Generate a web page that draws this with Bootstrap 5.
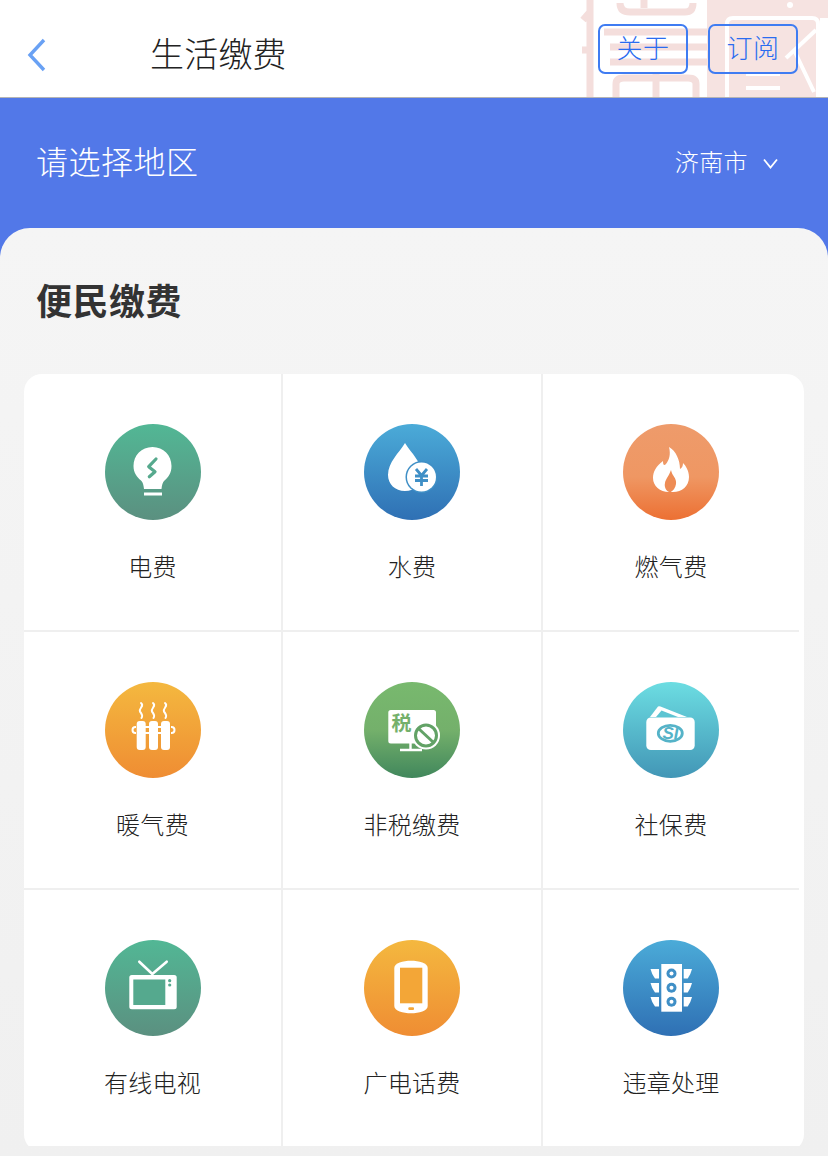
<!DOCTYPE html>
<html lang="zh-CN">
<head>
    <meta charset="UTF-8">
    <meta name="viewport" content="width=device-width, initial-scale=1.0">
    <title>生活缴费</title>
    <link rel="stylesheet" href="https://cdn.jsdelivr.net/npm/bootstrap@5.3.0/dist/css/bootstrap.min.css">
    <style>
        body {
            font-family: "Liberation Sans", "Noto Sans CJK SC", sans-serif;
            background-color: #f1f1f1;
            height: 1156px;
            overflow: hidden;
        }
        .top-bar {
            height: 98px;
            padding: 12px 30px 0 27px;
            border-bottom: 1px solid #b4b4b4;
            background-color: #fff;
            overflow: hidden;
        }
        .seal-mark {
            position: absolute;
            top: 0;
            left: 580px;
        }
        .page-title {
            margin: 0 0 0 103px;
            font-size: 34px;
            font-weight: 300;
            color: #222;
            line-height: 1;
            letter-spacing: .2px;
        }
        .head-btns {
            gap: 20px;
            margin-bottom: 12px;
        }
        .head-btn {
            --bs-btn-color: #2a6cf0;
            --bs-btn-border-color: #3f7cf2;
            --bs-btn-border-width: 2px;
            --bs-btn-border-radius: 7px;
            --bs-btn-font-size: 26px;
            --bs-btn-font-weight: 300;
            --bs-btn-padding-x: 0;
            --bs-btn-padding-y: 0;
            width: 90px;
            height: 50px;
            line-height: 44px;
            letter-spacing: .5px;
            background: transparent;
        }
        .blue-wrap {
            background-color: #5278e8;
        }
        .area-row {
            height: 130px;
            padding: 0 50px 0 36px;
            color: #fff;
            font-weight: 300;
        }
        .area-title {
            font-size: 32px;
            line-height: 1;
            padding-bottom: 1px;
            letter-spacing: .5px;
        }
        .area-city {
            font-size: 24px;
            line-height: 1;
            letter-spacing: .4px;
            gap: 15px;
        }
        .sheet {
            height: 928px;
            padding: 0 24px;
            border-radius: 30px 30px 0 0;
            background: linear-gradient(#f5f5f5, #f0f0f0);
        }
        .sheet-title {
            margin: 0;
            padding: 54px 0 50px 12px;
            font-size: 36px;
            font-weight: 700;
            line-height: 42px;
            letter-spacing: .5px;
            color: #333;
        }
        .fee-clip {
            height: 772px;
            overflow: hidden;
        }
        .fee-card {
            height: 778px;
            border: 0;
            border-radius: 18px;
            overflow: hidden;
        }
        .fee-grid {
            display: grid;
            grid-template-columns: 259px 260px 256px;
            grid-auto-rows: 258px;
        }
        .fee-cell {
            padding-top: 50px;
            border-right: 2px solid #efefef;
            border-bottom: 2px solid #efefef;
        }
        .fee-cell:nth-child(3n) {
            border-right: 0;
        }
        .fee-cell svg {
            display: block;
        }
        .fee-label {
            margin-top: 30px;
            font-size: 24px;
            font-weight: 300;
            line-height: 36px;
            letter-spacing: .3px;
            color: #222;
        }
    </style>
</head>
<body>
    <div class="top-bar position-relative d-flex align-items-center">
        <svg class="seal-mark" width="248" height="97" viewBox="0 0 248 97">
            <g fill="none" stroke="#f4dedc" stroke-width="7">
                <path d="M10 0V97M3 20l7-8M2 50h6"/>
                <path d="M40 3Q40 12 50 12H105Q113 12 113 3"/>
                <path d="M24 32H127M30 47H127M30 62H127"/>
                <path d="M36 97V84Q36 78 44 78H108Q116 78 116 84V97"/>
                <path d="M76 72V97"/>
                <path d="M64 0V8"/>
            </g>
            <path d="M127 0H248V18H240V97H127Z" fill="#f6e3e1"/>
            <g fill="none" stroke="#fff" stroke-width="4">
                <path d="M147 97V24Q147 18 153 18H232Q238 18 238 24V97"/>
                <path d="M166 74H200M166 88H200M214 50L234 92"/>
                <path d="M236 30L206 58"/>
            </g>
            <circle cx="210" cy="5" r="3" fill="#fff"/>
        </svg>
        <svg class="position-relative flex-shrink-0" width="20" height="34" viewBox="0 0 20 34">
            <path d="M17 2L3 17L17 32" fill="none" stroke="#69a1f4" stroke-width="3.4"/>
        </svg>
        <h1 class="page-title position-relative flex-grow-1">生活缴费</h1>
        <div class="head-btns position-relative d-flex">
            <button type="button" class="btn head-btn">关于</button>
            <button type="button" class="btn head-btn">订阅</button>
        </div>
    </div>

    <div class="blue-wrap">
        <div class="area-row d-flex align-items-center justify-content-between">
            <div class="area-title">请选择地区</div>
            <div class="area-city d-flex align-items-center">
                济南市
                <svg width="15" height="11" viewBox="0 0 15 11">
                    <path d="M1 1.5L7.500 9.500L14 1.500" fill="none" stroke="#fff" stroke-width="1.800"/>
                </svg>
            </div>
        </div>

        <div class="sheet">
            <h2 class="sheet-title">便民缴费</h2>
            <div class="fee-clip">
            <div class="card fee-card">
                <div class="fee-grid">
                    <div class="fee-cell d-flex flex-column align-items-center">
                        <svg width="96" height="96" viewBox="0 0 96 96">
                            <defs>
                                <linearGradient id="gGreen" x1="0" y1="0" x2="0" y2="1"><stop offset="0" stop-color="#52b795"/><stop offset="1" stop-color="#5b9080"/></linearGradient>
                                <linearGradient id="gBlue" x1="0" y1="0" x2="0" y2="1"><stop offset="0" stop-color="#4babd8"/><stop offset="1" stop-color="#2f70b4"/></linearGradient>
                                <linearGradient id="gFlame" x1="0" y1="0" x2="0" y2="1"><stop offset="0" stop-color="#ee9b6b"/><stop offset=".55" stop-color="#ef9763"/><stop offset="1" stop-color="#ec7033"/></linearGradient>
                                <linearGradient id="gAmber" x1="0" y1="0" x2="0" y2="1"><stop offset="0" stop-color="#f4b83f"/><stop offset="1" stop-color="#ef8d33"/></linearGradient>
                                <linearGradient id="gLeaf" x1="0" y1="0" x2="0" y2="1"><stop offset="0" stop-color="#78b96e"/><stop offset=".5" stop-color="#74b06b"/><stop offset="1" stop-color="#41875c"/></linearGradient>
                                <linearGradient id="gTeal" x1="0" y1="0" x2="0" y2="1"><stop offset="0" stop-color="#6cdde2"/><stop offset="1" stop-color="#4296b6"/></linearGradient>
                            </defs>
                            <circle cx="48" cy="48" r="48" fill="url(#gGreen)"/>
                            <path d="M47.500 23C36.500 23 28.500 31.500 28.500 42C28.500 49 32 53 36 56.500C38 58.500 38.500 61 39 65H56.500C57 61 57.500 58.500 59.500 56.500C63.500 53 66.500 49 66.500 42C66.500 31.500 58.500 23 47.500 23Z" fill="#fff"/>
                            <path d="M39 70H57" stroke="#fff" stroke-width="3"/>
                            <path d="M51 35L43.700 42.700L50 47.700L44.300 52.700" fill="none" stroke="#56a98d" stroke-width="3.200" stroke-linecap="round" stroke-linejoin="round"/>
                        </svg>
                        <div class="fee-label">电费</div>
                    </div>
                    <div class="fee-cell d-flex flex-column align-items-center">
                        <svg width="96" height="96" viewBox="0 0 96 96">
                            <circle cx="48" cy="48" r="48" fill="url(#gBlue)"/>
                            <path d="M41 19C35 29 24 38 24 51C24 60 31 67 41 67C51 67 58 60 58 51C58 38 47 29 41 19Z" fill="#fff"/>
                            <circle cx="57.500" cy="53" r="16" fill="#3f8fc6"/>
                            <circle cx="57.500" cy="53" r="14.500" fill="#fff"/>
                            <path d="M52 45L57.500 51.500L63 45M51 52H64M51 56.500H64M57.500 51.500V62" fill="none" stroke="#3f8fc6" stroke-width="2.800"/>
                        </svg>
                        <div class="fee-label">水费</div>
                    </div>
                    <div class="fee-cell d-flex flex-column align-items-center">
                        <svg width="96" height="96" viewBox="0 0 96 96">
                            <circle cx="48" cy="48" r="48" fill="url(#gFlame)"/>
                            <path d="M46 23C48 31 46 36 43 40C41 42 40 41 40 37C33 42 30 48 30 54C30 62 37 68 46 68H50C59 68 66 62 66 53C66 47 63 42 60 39C60 42 59 44 57 45C57 36 53 27 46 23Z" fill="#fff"/>
                            <path d="M48 46C49 52 54 54 53 60C52.500 64 50 67 47 68.500C43 67 41 63 42 59C42.500 55 46 52 48 46Z" fill="#ee8c55"/>
                        </svg>
                        <div class="fee-label">燃气费</div>
                    </div>

                    <div class="fee-cell d-flex flex-column align-items-center">
                        <svg width="96" height="96" viewBox="0 0 96 96">
                            <circle cx="48" cy="48" r="48" fill="url(#gAmber)"/>
                            <rect x="31.700" y="39" width="9" height="29" rx="3" fill="#fff"/>
                            <rect x="44" y="39" width="9" height="29" rx="3" fill="#fff"/>
                            <rect x="56" y="39" width="9" height="29" rx="3" fill="#fff"/>
                            <path d="M31 45H30.500A3 3 0 0 0 30.500 51H31M66 45H66.500A3 3 0 0 1 66.500 51H66M40 45H57M40 51H57" fill="none" stroke="#fff" stroke-width="2"/>
                            <g fill="none" stroke="#fff" stroke-width="2" stroke-linecap="round">
                                <path d="M36 21C40 24 33.500 26 35 29.500C36 31.500 38.500 33 36.500 36"/>
                                <path d="M48 21C52 24 45.500 26 47 29.500C48 31.500 50.500 33 48.500 36"/>
                                <path d="M60 21C64 24 57.500 26 59 29.500C60 31.500 62.500 33 60.500 36"/>
                            </g>
                        </svg>
                        <div class="fee-label">暖气费</div>
                    </div>
                    <div class="fee-cell d-flex flex-column align-items-center">
                        <svg width="96" height="96" viewBox="0 0 96 96">
                            <circle cx="48" cy="48" r="48" fill="url(#gLeaf)"/>
                            <rect x="24.300" y="28" width="47.700" height="33.500" rx="2.500" fill="#fff"/>
                            <path d="M46.500 61V67M36 68H58" stroke="#fff" stroke-width="2.400"/>
                            <text x="27.500" y="49" font-size="20" font-weight="700" fill="#74b06b" font-family="Noto Sans CJK SC">税</text>
                            <circle cx="62" cy="53.500" r="14" fill="#fff"/>
                            <circle cx="62" cy="53.500" r="10.500" fill="none" stroke="#62a266" stroke-width="3"/>
                            <path d="M55 47L69 60" stroke="#62a266" stroke-width="3"/>
                        </svg>
                        <div class="fee-label">非税缴费</div>
                    </div>
                    <div class="fee-cell d-flex flex-column align-items-center">
                        <svg width="96" height="96" viewBox="0 0 96 96">
                            <circle cx="48" cy="48" r="48" fill="url(#gTeal)"/>
                            <path d="M27 35L35 24.500Q36 24 37.500 24.500L64 35Z" fill="#fff"/>
                            <path d="M33 35L38.500 28.500L55 35Z" fill="#5cc4d2"/>
                            <rect x="23.300" y="35.500" width="48.400" height="32.500" rx="4.500" fill="#fff"/>
                            <ellipse cx="47.300" cy="51.300" rx="12" ry="8" fill="none" stroke="#55b3c8" stroke-width="2.800"/>
                            <text x="39.500" y="57" font-size="17" font-weight="700" font-style="italic" fill="#55b3c8" font-family="Liberation Sans">SI</text>
                        </svg>
                        <div class="fee-label">社保费</div>
                    </div>

                    <div class="fee-cell d-flex flex-column align-items-center">
                        <svg width="96" height="96" viewBox="0 0 96 96">
                            <circle cx="48" cy="48" r="48" fill="url(#gGreen)"/>
                            <rect x="24.300" y="35" width="47.400" height="34.300" rx="2.500" fill="#fff"/>
                            <rect x="28.300" y="39.500" width="32" height="25.500" fill="#55a98e"/>
                            <circle cx="64.700" cy="40.700" r="1.600" fill="#55a98e"/>
                            <circle cx="64.700" cy="45" r="1.600" fill="#55a98e"/>
                            <path d="M34.300 21.700L47.300 34L61.700 21.700" fill="none" stroke="#fff" stroke-width="2.600" stroke-linecap="round"/>
                        </svg>
                        <div class="fee-label">有线电视</div>
                    </div>
                    <div class="fee-cell d-flex flex-column align-items-center">
                        <svg width="96" height="96" viewBox="0 0 96 96">
                            <circle cx="48" cy="48" r="48" fill="url(#gAmber)"/>
                            <path d="M30.300 28C30.300 23 39 20.700 47 20.700C55 20.700 63.700 23 63.700 28V66C63.700 71 55 73.300 47 73.300C39 73.300 30.300 71 30.300 66Z" fill="#fff"/>
                            <rect x="36" y="27.700" width="22.300" height="35.600" fill="#f3a637"/>
                            <rect x="44.300" y="67.300" width="5.700" height="2.700" rx="1" fill="#f3a637"/>
                        </svg>
                        <div class="fee-label">广电话费</div>
                    </div>
                    <div class="fee-cell d-flex flex-column align-items-center">
                        <svg width="96" height="96" viewBox="0 0 96 96">
                            <circle cx="48" cy="48" r="48" fill="url(#gBlue)"/>
                            <rect x="38.300" y="24" width="20.700" height="47.700" fill="#fff"/>
                            <g fill="#fff">
                                <path d="M27.500 29H36V38.500H32Q29 35 27.500 29Z"/>
                                <path d="M27.500 43H36V52.500H32Q29 49 27.500 43Z"/>
                                <path d="M27.500 57H36V66.500H32Q29 63 27.500 57Z"/>
                                <path d="M69 29H60.700V38.500H64.700Q67.500 35 69 29Z"/>
                                <path d="M69 43H60.700V52.500H64.700Q67.500 49 69 43Z"/>
                                <path d="M69 57H60.700V66.500H64.700Q67.500 63 69 57Z"/>
                            </g>
                            <g fill="#3f8fc6">
                                <circle cx="48.500" cy="33.500" r="5"/>
                                <circle cx="48.500" cy="47.700" r="5"/>
                                <circle cx="48.500" cy="61.700" r="5"/>
                            </g>
                            <g fill="#fff">
                                <circle cx="48.500" cy="33.500" r="2"/>
                                <circle cx="48.500" cy="47.700" r="2"/>
                                <circle cx="48.500" cy="61.700" r="2"/>
                            </g>
                        </svg>
                        <div class="fee-label">违章处理</div>
                    </div>
                </div>
            </div>
            </div>
        </div>
    </div>

    <script src="https://cdn.jsdelivr.net/npm/bootstrap@5.3.0/dist/js/bootstrap.bundle.min.js"></script>
</body>
</html>
